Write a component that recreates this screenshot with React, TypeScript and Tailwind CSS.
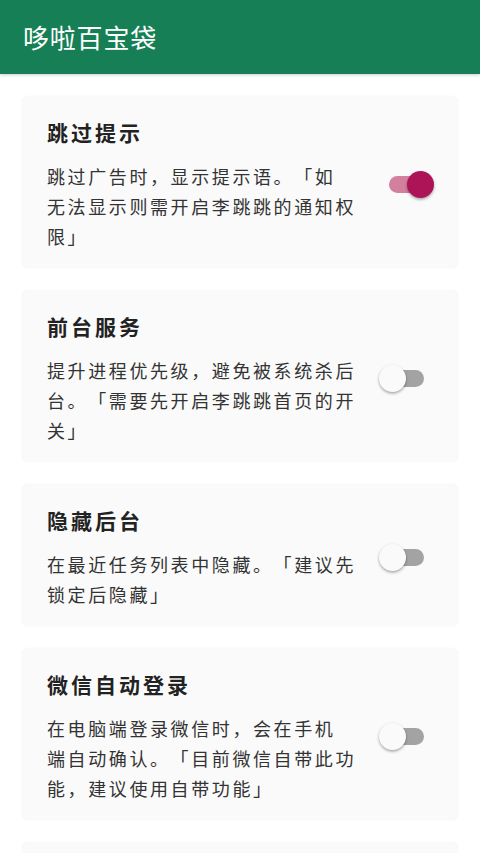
import { useState } from 'react';

type Setting = {
  id: string;
  title: string;
  lines: string[];
  on: boolean;
};

const initialSettings: Setting[] = [
  {
    id: 'skip-tip',
    title: '跳过提示',
    lines: ['跳过广告时，显示提示语。「如', '无法显示则需开启李跳跳的通知权', '限」'],
    on: true,
  },
  {
    id: 'foreground',
    title: '前台服务',
    lines: ['提升进程优先级，避免被系统杀后', '台。「需要先开启李跳跳首页的开', '关」'],
    on: false,
  },
  {
    id: 'hide-recent',
    title: '隐藏后台',
    lines: ['在最近任务列表中隐藏。「建议先', '锁定后隐藏」'],
    on: false,
  },
  {
    id: 'wechat-login',
    title: '微信自动登录',
    lines: ['在电脑端登录微信时，会在手机', '端自动确认。「目前微信自带此功', '能，建议使用自带功能」'],
    on: false,
  },
];

function Switch({ on, onToggle }: { on: boolean; onToggle: () => void }) {
  return (
    <button
      onClick={onToggle}
      className="relative w-[55px] h-[28px] shrink-0 outline-none"
      aria-pressed={on}
    >
      <span
        className={`absolute left-[10px] right-[10px] top-[5.5px] h-[17px] rounded-full ${
          on ? 'bg-[#d3809f]' : 'bg-[#a3a3a3]'
        }`}
      />
      <span
        className={`absolute top-0 w-[27px] h-[27px] rounded-full shadow-[0_1.5px_3px_rgba(0,0,0,0.35)] ${
          on ? 'left-[28px] bg-[#ad1457]' : 'left-0 bg-[#fafafa]'
        }`}
      />
    </button>
  );
}

export default function App() {
  const [settings, setSettings] = useState(initialSettings);

  const toggle = (id: string) =>
    setSettings((prev) => prev.map((s) => (s.id === id ? { ...s, on: !s.on } : s)));

  return (
    <div
      className="h-[853px] overflow-hidden bg-white [text-spacing-trim:space-all]"
      style={{ fontFamily: '"Noto Sans CJK SC", "Noto Sans", sans-serif' }}
    >
      {/* 标题栏 */}
      <header className="h-[74px] bg-[#167f56] flex items-center px-[23px] shadow-[0_1px_3px_rgba(0,0,0,0.2)] relative z-10">
        <h1 className="text-white text-[26px] tracking-[0.8px] leading-none">哆啦百宝袋</h1>
      </header>

      {/* 设置列表 */}
      <div className="flex flex-col gap-[22px] px-[22px] pt-[22px]">
        {settings.map((s) => (
          <div
            key={s.id}
            className="bg-[#fafafa] rounded-[6px] shadow-[0_0_1px_rgba(0,0,0,0.12)] flex items-center pl-[25px] pr-[24px] pt-[22px] pb-[17px]"
          >
            <div className="flex-1 min-w-0">
              <h2 className="text-[21px] leading-[28px] font-bold tracking-[3px] text-[#222]">{s.title}</h2>
              <p className="mt-[15px] text-[18px] leading-[30px] tracking-[2.6px] text-[#333] whitespace-nowrap">
                {s.lines.map((line, i) => (
                  <span key={i} className="block">
                    {line}
                  </span>
                ))}
              </p>
            </div>
            <Switch on={s.on} onToggle={() => toggle(s.id)} />
          </div>
        ))}
        <div className="bg-[#fafafa] rounded-[6px] shadow-[0_0_1px_rgba(0,0,0,0.12)] h-[120px]" />
      </div>
    </div>
  );
}
